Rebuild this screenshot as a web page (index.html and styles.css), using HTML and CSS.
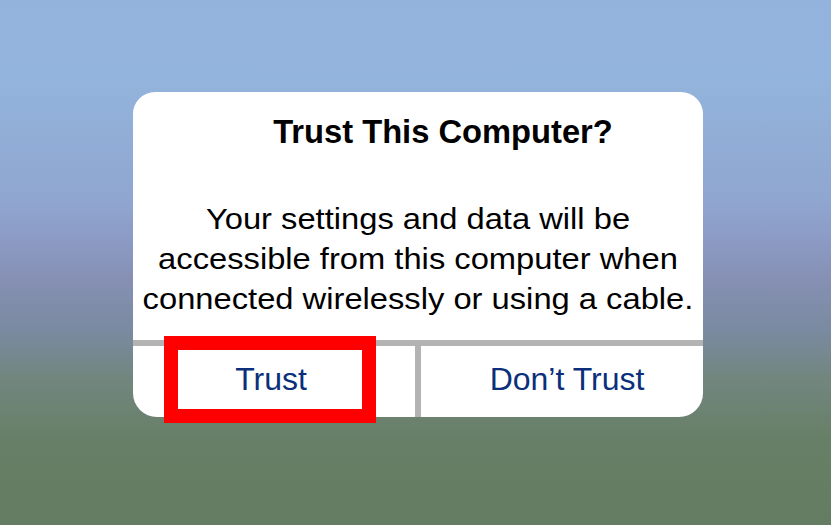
FILE: index.html
```html
<!DOCTYPE html>
<html lang="en">
<head>
<meta charset="utf-8">
<title>Trust This Computer?</title>
<link rel="stylesheet" href="styles.css">
</head>
<body>
<div class="screen">
  <div class="dialog">
    <div class="content">
      <h1 class="title">Trust This Computer?</h1>
      <p class="message">Your settings and data will be<br>accessible from this computer when<br>connected wirelessly or using a cable.</p>
    </div>
    <div class="actions">
      <div class="action action-trust">
        <span class="label">Trust</span>
        <div class="highlight"></div>
      </div>
      <div class="divider"></div>
      <div class="action action-deny">
        <span class="label">Don’t Trust</span>
      </div>
    </div>
  </div>
</div>
</body>
</html>
```
FILE: styles.css
```css
html, body {
  margin: 0;
  padding: 0;
}

body {
  width: 831px;
  height: 525px;
  overflow: hidden;
  font-family: "Liberation Sans", Arial, sans-serif;
}

.screen {
  box-sizing: border-box;
  width: 831px;
  height: 525px;
  padding: 92px 0 0 133px;
  background: linear-gradient(to bottom,
    #93b3dc 0%,
    #93b4dc 15%,
    #8fa6d0 38%,
    #8c9cc6 45%,
    #8690b4 53%,
    #7a8aa0 63%,
    #72867f 72%,
    #677f66 84%,
    #647c61 100%);
}

.dialog {
  width: 570px;
  height: 325px;
  background: #ffffff;
  border-radius: 22px 22px 24px 24px;
  display: flex;
  flex-direction: column;
}

.content {
  height: 248px;
  box-sizing: border-box;
  padding-top: 20px;
  text-align: center;
}

.title {
  margin: 0;
  padding-left: 50px;
  font-size: 32.7px;
  line-height: 40px;
  font-weight: bold;
  color: #000000;
}

.message {
  margin: 47px 0 0 0;
  font-size: 30px;
  line-height: 40px;
  color: #000000;
  transform: scaleX(1.09);
}

.actions {
  border-top: 6px solid #b3b3b3;
  height: 71px;
  display: flex;
}

.action {
  flex: 0 0 282px;
  position: relative;
  box-sizing: border-box;
  height: 71px;
  padding-bottom: 4px;
  text-align: center;
  font-size: 32px;
  line-height: 67px;
  color: #0b2f7a;
}

.action-trust {
  padding-right: 6px;
}

.action-deny {
  padding-left: 10px;
}

.divider {
  flex: 0 0 6px;
  background: #b3b3b3;
}

.highlight {
  position: absolute;
  left: 31px;
  top: -10px;
  width: 212px;
  height: 87px;
  box-sizing: border-box;
  border: 14px solid #ff0000;
}
```
